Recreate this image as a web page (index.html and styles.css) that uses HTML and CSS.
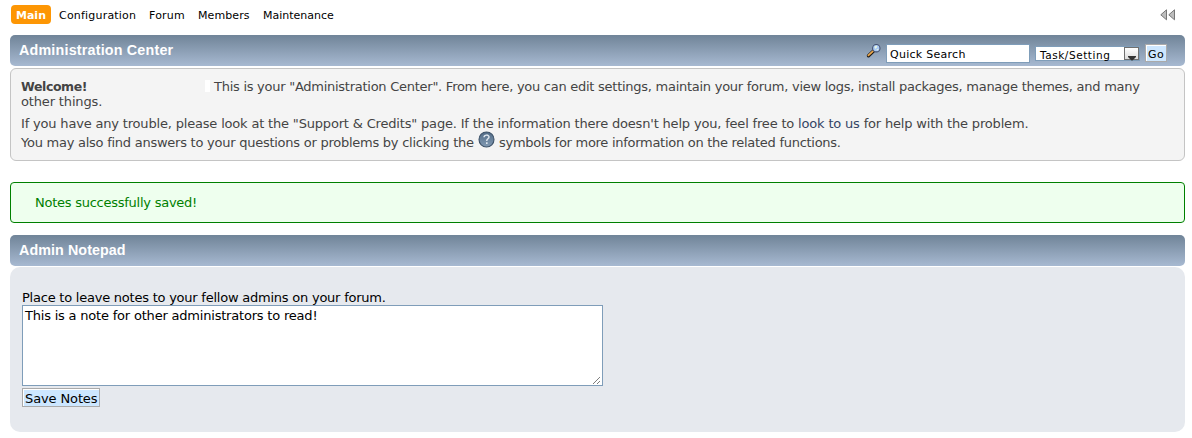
FILE: index.html
```html
<!DOCTYPE html>
<html lang="en">
<head>
<meta charset="utf-8">
<title>Administration Center</title>
<link rel="stylesheet" href="styles.css">
</head>
<body>
<nav class="menu">
  <a class="menu-item active">Main</a>
  <a class="menu-item configuration">Configuration</a>
  <a class="menu-item forum">Forum</a>
  <a class="menu-item members">Members</a>
  <a class="menu-item maintenance">Maintenance</a>
  <svg class="collapse" width="16" height="12" viewBox="0 0 16 12"><path d="M6.500.8v10L.8 5.800zM14.500.8v10L8.800 5.800z" fill="#bdbdbd" stroke="#777" stroke-width="1"/></svg>
</nav>
<header class="title-bar">
  <h3 class="title">Administration Center</h3>
  <form class="search">
    <svg class="magnifier" width="16" height="16" viewBox="0 0 16 16">
      <path d="M2.500 12.800L7.500 8" stroke="#1d1a18" stroke-width="3.400" stroke-linecap="round"/>
      <path d="M2.400 12.300L7 8.200" stroke="#eda94e" stroke-width="1.800" stroke-linecap="round"/>
      <circle cx="10.300" cy="5.200" r="3.700" fill="#a9c9f5" stroke="#45516f" stroke-width="1.100"/>
      <path d="M8.300 3.700l2-1.300 1 1.500-2 2zM10.300 6.700l2-1v1.800z" fill="#e9f7df"/>
    </svg>
    <span class="search-input"><span class="search-text">Quick Search</span></span>
    <span class="select"><span class="select-text">Task/Setting</span><span class="select-arrow"><svg width="8" height="5" viewBox="0 0 8 5"><path d="M0 0h8v1L4.500 4.500h-1L0 1z" fill="#333"/></svg></span></span>
    <span class="button go"><span class="go-text">Go</span></span>
  </form>
</header>
<section class="welcome">
  <p class="line first"><strong class="welcome-label">Welcome!</strong><span class="blank"></span><span class="intro">This is your "Administration Center". From here, you can edit settings, maintain your forum, view logs, install packages, manage themes, and many</span></p>
  <p class="line"><span class="other">other things.</span></p>
  <p class="line trouble"><span class="trouble-text">If you have any trouble, please look at the "Support &amp; Credits" page. If the information there doesn't help you, feel free to <a class="link">look to us</a> for help with the problem.</span></p>
  <p class="line answers"><span class="answers-text">You may also find answers to your questions or problems by clicking the</span><svg class="help" width="17" height="17" viewBox="0 0 17 17"><defs><linearGradient id="disc" x2="0" y2="1"><stop stop-color="#526c87"/><stop offset="1" stop-color="#829ab3"/></linearGradient></defs><circle cx="8.500" cy="8.500" r="7.500" fill="url(#disc)" stroke="#3d5269" stroke-width="1.100"/><path d="M6 6.300C6.100 3.400 11 3.500 11 6c0 1.700-2.300 1.900-2.300 4" fill="none" stroke="#dce5ed" stroke-width="1.500"/><path d="M8 11.300h1.600v1.600H8z" fill="#dce5ed"/></svg><span class="symbols-text">symbols for more information on the related functions.</span></p>
</section>
<div class="success"><span class="success-text">Notes successfully saved!</span></div>
<header class="title-bar">
  <h3 class="title notepad-title">Admin Notepad</h3>
</header>
<section class="notepad">
  <p class="line notepad-label"><span class="place-text">Place to leave notes to your fellow admins on your forum.</span></p>
  <div class="notes"><span class="note-text">This is a note for other administrators to read!</span>
    <svg class="grip" width="9" height="9" viewBox="0 0 9 9"><path d="M1 8L8 1M5 8L8 5" stroke="#555" stroke-dasharray="1.100 .3"/></svg>
  </div>
  <span class="button save"><span class="save-text">Save Notes</span></span>
</section>
</body>
</html>
```
FILE: styles.css
```css
* { box-sizing: border-box; }
body { margin: 0; width: 1192px; height: 438px; overflow: hidden; padding: 0 7px 0 10px; background: #fff; color: #000; font: 13px/15px Verdana, "DejaVu Sans", sans-serif; white-space: nowrap; }
p, h3 { margin: 0; }
svg { display: block; flex: none; }
span, strong, a { flex: none; }

.menu { display: flex; align-items: flex-start; height: 35px; padding: 5px 9px 0 1px; font-size: 11px; }
.menu-item { height: 19px; line-height: 21px; }
.active { width: 40px; margin-right: 8px; padding-left: 5px; border-radius: 4px; background: #fd9604; color: #fff; font-weight: bold; }
.configuration { width: 90px; letter-spacing: .2px; }
.forum { width: 49px; letter-spacing: .2px; }
.members { width: 65px; letter-spacing: .1px; }
.collapse { margin: 4px 0 0 auto; }

.title-bar { display: flex; justify-content: space-between; height: 31px; padding: 0 18px 0 9px; border-radius: 5px; background: linear-gradient(#708498, #a7b9d1); }
.title { color: #fff; font: bold 14.300px/30px "Liberation Sans", Arial, sans-serif; letter-spacing: .2px; }
.notepad-title { letter-spacing: .08px; }
.search { display: flex; align-items: flex-start; }
.magnifier { margin: 8px 4px 0 0; }
.search-input { width: 144px; height: 19px; margin: 9px 5px 0 0; padding-left: 3px; border: 1px solid #7f9db9; background: #fff; font-size: 11px; line-height: 19px; letter-spacing: .27px; }
.select { display: flex; width: 105px; height: 15px; margin: 11px 5px 0 0; padding-left: 4px; border: 1px solid #7f9db9; background: #fff; font-size: 10.500px; line-height: 16px; letter-spacing: .55px; }
.select-arrow { display: flex; width: 15px; height: 13px; margin-left: auto; padding: 8px 0 0 3px; border: 1px solid #707070; background: linear-gradient(#fff, #ddd); }
.button { display: block; border: 1px solid #aaa; background: #cde7ff; box-shadow: inset 1px 1px #fff; }
.go { width: 22px; height: 18px; margin-top: 9px; padding-left: 2px; font-size: 11px; line-height: 19px; letter-spacing: .4px; }

.welcome { height: 93px; margin-top: 2px; padding: 10px 10px 0; border: 1px solid #c4c4c4; border-radius: 6px; background: #f4f4f4; color: #444; }
.line { display: flex; height: 15px; }
.welcome-label { width: 184px; font-size: 12.500px; letter-spacing: -.4px; }
.blank { width: 5px; height: 12px; margin: 1px 4px 0 0; background: #fff; }
.intro { letter-spacing: -.262px; }
.other { letter-spacing: -.15px; }
.trouble { margin-top: 7px; }
.trouble-text { letter-spacing: -.178px; }
.answers { height: 19px; line-height: 23px; }
.answers-text { width: 458px; letter-spacing: -.25px; }
.symbols-text { letter-spacing: -.28px; }
.help { margin: 0 4px 0 -1px; }
.link { color: #334466; }

.success { height: 41px; margin: 21px 0 12px; padding-left: 24px; border: 1px solid #008000; border-radius: 4px; background: #efe; color: #008000; line-height: 40px; letter-spacing: -.25px; }

.notepad { height: 165px; margin-top: 1px; padding: 23px 12px 0; border-radius: 10px; background: #e6e9ee; }
.place-text { letter-spacing: -.23px; }
.notes { display: flex; justify-content: space-between; width: 581px; height: 81px; padding: 2px 1px 0 2px; border: 1px solid #7f9db9; background: #fff; line-height: 15px; letter-spacing: -.2px; }
.grip { align-self: flex-end; }
.save { width: 78px; height: 19px; margin-top: 2px; padding-left: 2px; line-height: 20px; letter-spacing: -.12px; }
```
